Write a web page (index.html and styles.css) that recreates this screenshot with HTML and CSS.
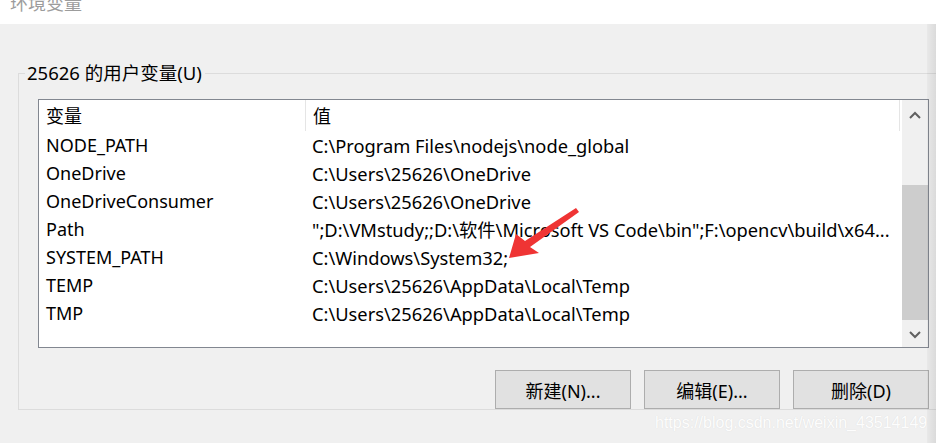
FILE: index.html
```html
<!DOCTYPE html>
<html lang="zh-CN">
<head>
<meta charset="utf-8">
<title>环境变量</title>
<link rel="stylesheet" href="styles.css">
</head>
<body>
<div class="window">
  <div class="titlebar"><span class="title">环境变量</span></div>
  <fieldset class="group">
    <legend class="legend">25626 的用户变量(U)</legend>
    <div class="listbox">
      <div class="table">
        <div class="row head">
          <div class="c1">变量</div>
          <div class="c2">值</div>
        </div>
        <div class="row"><div class="c1">NODE_PATH</div><div class="c2">C:\Program Files\nodejs\node_global</div></div>
        <div class="row"><div class="c1">OneDrive</div><div class="c2">C:\Users\25626\OneDrive</div></div>
        <div class="row"><div class="c1">OneDriveConsumer</div><div class="c2">C:\Users\25626\OneDrive</div></div>
        <div class="row"><div class="c1">Path</div><div class="c2">";D:\VMstudy;;D:\软件\Microsoft VS Code\bin";F:\opencv\build\x64...</div></div>
        <div class="row"><div class="c1">SYSTEM_PATH</div><div class="c2">C:\Windows\System32;</div></div>
        <div class="row"><div class="c1">TEMP</div><div class="c2">C:\Users\25626\AppData\Local\Temp</div></div>
        <div class="row"><div class="c1">TMP</div><div class="c2">C:\Users\25626\AppData\Local\Temp</div></div>
      </div>
      <div class="scrollbar">
        <div class="sb-btn sb-up">
          <svg width="12" height="8" viewBox="0 0 12 8"><path d="M1 7 L6 2 L11 7" fill="none" stroke="#606060" stroke-width="2"/></svg>
        </div>
        <div class="sb-track"><div class="sb-thumb"></div></div>
        <div class="sb-btn sb-down">
          <svg width="12" height="8" viewBox="0 0 12 8"><path d="M1 1 L6 6 L11 1" fill="none" stroke="#606060" stroke-width="2"/></svg>
        </div>
      </div>
      <svg class="arrow" width="80" height="60" viewBox="500 204 80 60">
        <polygon points="509,258 516,234 525,241 576,208 579,212 530,247 539,253" fill="#ef3434"/>
      </svg>
    </div>
    <div class="buttons">
      <button class="btn">新建(N)...</button>
      <button class="btn">编辑(E)...</button>
      <button class="btn">删除(D)</button>
    </div>
  </fieldset>
  <div class="watermark">https://blog.csdn.net/weixin_43514149</div>
  <div class="shade"></div>
</div>
</body>
</html>
```

FILE: styles.css
```css
html, body {
  margin: 0;
  padding: 0;
}
body {
  width: 936px;
  height: 443px;
  overflow: hidden;
  background: #f0f0f0;
  font-family: "Noto Sans", "Noto Sans CJK SC", sans-serif;
  color: #000;
}
.window {
  position: relative;
  width: 936px;
  height: 443px;
  overflow: hidden;
}
.titlebar {
  height: 24px;
  background: #fff;
  overflow: hidden;
}
.title {
  display: block;
  margin: -8px 0 0 10px;
  font-family: "Noto Sans CJK SC", sans-serif;
  font-size: 18px;
  line-height: 20px;
  color: #9c9c9c;
}
.group {
  margin: 37px 0 0 18px;
  padding: 14px 0 0 19px;
  width: 960px;
  height: 349px;
  box-sizing: border-box;
  border: 1px solid #dcdcdc;
  border-right: none;
}
.legend {
  margin-left: -13px;
  padding: 0 3px 0 2px;
  font-size: 18.5px;
  line-height: 24px;
}
.listbox {
  position: relative;
  display: flex;
  width: 891px;
  height: 249px;
  box-sizing: border-box;
  border: 1px solid #828790;
  background: #fff;
}
.table {
  flex: 1;
  overflow: hidden;
}
.row {
  display: flex;
  height: 28px;
  align-items: center;
  font-size: 18px;
  white-space: nowrap;
}
.row.head {
  height: 31px;
}
.c1 {
  width: 266px;
  box-sizing: border-box;
  padding-left: 7px;
  flex: none;
}
.c2 {
  padding-left: 7px;
  overflow: hidden;
  font-size: 18.3px;
}
.head .c1, .head .c2 {
  font-family: "Noto Sans CJK SC", sans-serif;
  font-size: 18px;
  height: 31px;
  line-height: 31px;
}
.head .c2 {
  border-left: 1px solid #e5e5e5;
  flex: 1;
  margin-right: 2px;
  border-right: 1px solid #e5e5e5;
}
.scrollbar {
  width: 26px;
  flex: none;
  background: #f0f0f0;
  display: flex;
  flex-direction: column;
}
.sb-btn {
  display: flex;
  align-items: center;
  justify-content: center;
  flex: none;
}
.sb-up {
  height: 30px;
}
.sb-down {
  height: 25px;
}
.sb-track {
  flex: 1;
  padding: 55px 2px 2px 2px;
  box-sizing: border-box;
}
.sb-thumb {
  height: 100%;
  background: #cdcdcd;
  margin: 0 -2px;
}
.arrow {
  position: absolute;
  left: 461px;
  top: 104px;
}
.buttons {
  display: flex;
  justify-content: flex-end;
  gap: 13px;
  width: 891px;
  margin-top: 22px;
}
.btn {
  width: 136px;
  height: 39px;
  background: #e1e1e1;
  border: 1px solid #adadad;
  border-radius: 0;
  font-family: "Noto Sans", "Noto Sans CJK SC", sans-serif;
  font-size: 18px;
  color: #000;
  padding: 0;
}
.watermark {
  position: absolute;
  left: 655px;
  top: 414px;
  font-family: "Liberation Sans", Arial, sans-serif;
  font-size: 16px;
  color: #fdfdfd;
  text-shadow: 0 0 1px #d8d8d8;
}
.shade {
  position: absolute;
  right: 0;
  top: 24px;
  width: 9px;
  height: 419px;
  background: linear-gradient(to right, rgba(0,0,0,0.03), rgba(0,0,0,0.09));
}
```
